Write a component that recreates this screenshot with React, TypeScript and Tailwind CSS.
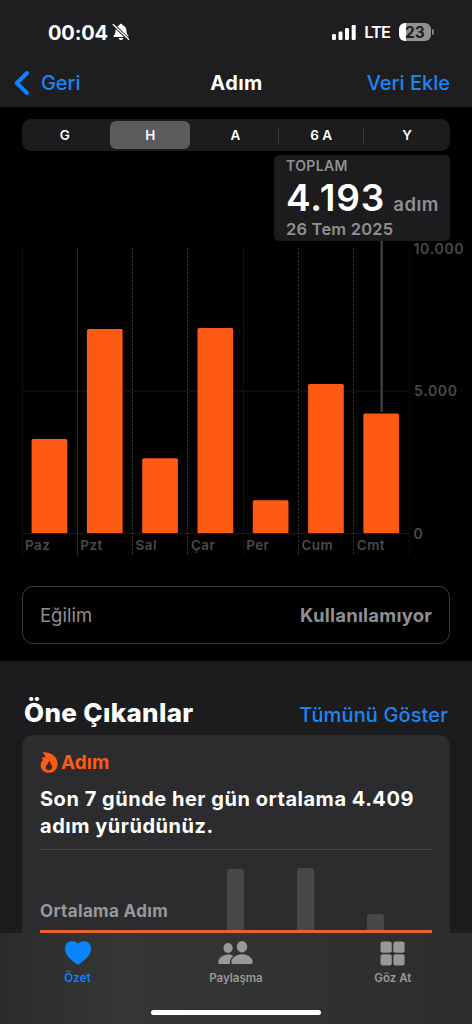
import { useState } from "react"

interface DayEntry {
  day: string
  steps: number
  line: "faint" | "solid" | "dashed"
}

const WEEK: DayEntry[] = [
  { day: "Paz", steps: 3298, line: "faint" },
  { day: "Pzt", steps: 7160, line: "solid" },
  { day: "Sal", steps: 2625, line: "dashed" },
  { day: "Çar", steps: 7195, line: "dashed" },
  { day: "Per", steps: 1150, line: "faint" },
  { day: "Cum", steps: 5228, line: "dashed" },
  { day: "Cmt", steps: 4193, line: "dashed" },
]

const RANGES = ["G", "H", "A", "6 A", "Y"]

const LINE_COLOR = { faint: "#101011", solid: "#2a2a2c", dashed: "#303032" }

// Plot geometry
const COL = 55.3
const PLOT_TOP = 7
const PLOT_H = 285
const BASE = PLOT_TOP + PLOT_H

const barHeight = (steps: number) => (steps / 10000) * PLOT_H

function BellSlashIcon() {
  return (
    <svg width="18" height="18" viewBox="0 0 18 18" className="mb-px ml-[4px]">
      <path
        d="M9 .8c.9 0 1.5.6 1.600 1.400 2.500.7 3.700 2.700 3.800 5.200.1 2.600.7 3.900 1.900 5.100.5.6.2 1.500-.7 1.500H2.400c-.9 0-1.200-.9-.7-1.500C2.900 11.300 3.500 10 3.600 7.400c.1-2.500 1.300-4.500 3.800-5.200C7.500 1.400 8.100.8 9 .8Z"
        fill="#fff"
      />
      <path d="M6.600 15h4.800c-.3 1.200-1.200 1.900-2.400 1.900S6.900 16.200 6.600 15Z" fill="#fff" />
      <path d="M.8 1.200 16.800 16.600" stroke="#1e1e20" strokeWidth="3" />
      <path d="M1.200 1.500 16.600 16.300" stroke="#fff" strokeWidth="1.300" strokeLinecap="round" />
    </svg>
  )
}

function SignalIcon() {
  return (
    <svg width="26" height="16" viewBox="0 0 26 16" fill="#fff">
      <rect x="1" y="10" width="4" height="6" rx="1.200" />
      <rect x="7.500" y="7.500" width="4" height="8.500" rx="1.200" />
      <rect x="14" y="4" width="4" height="12" rx="1.200" />
      <rect x="20.700" y="1" width="4" height="15" rx="1.200" />
    </svg>
  )
}

function FlameIcon() {
  return (
    <svg width="18" height="21" viewBox="0 0 18 21" className="shrink-0">
      <path
        fillRule="evenodd"
        d="M3.200.2C9.500-.2 14.800 2.600 16.800 8c1 2.700 1 5.200.1 7.500-1.300 3.400-4.300 5.300-8.100 5.300C4.200 20.800.8 17.800.7 13.700.6 11 1.600 9.300 3.300 8 2.500 7.500 2 6.700 1.900 5.700c0-.4.4-.6.800-.4.900.4 1.700.4 2.500.1C5.300 3.800 4.500 2.400 2.900 1 2.500.6 2.700.2 3.200.2ZM9.500 9c-.3-.2-.6 0-.6.300 0 1.300-.8 2-1.600 2.900-.9 1-1.500 1.800-1.500 3 0 1.800 1.300 3 3.200 3s3.200-1.200 3.200-3.100c0-1-.3-1.800-.8-2.500-.2.300-.5.500-.8.500.2-1.600-.1-3.100-1.100-4.100Z"
        fill="#ff5a14"
      />
    </svg>
  )
}

function HeartIcon() {
  return (
    <svg width="26" height="24" viewBox="0 0 26 24">
      <path
        d="M13 23.500c-.5 0-1.100-.3-1.900-.9C4.500 17.800 0 13.300 0 7.700 0 3.300 3 .3 6.900.3c2.700 0 4.900 1 6.100 2.500C14.200 1.300 16.400.3 19.100.3 23 .3 26 3.300 26 7.700c0 5.600-4.500 10.100-11.100 14.900-.8.6-1.400.9-1.900.9Z"
        fill="#0a84ff"
      />
    </svg>
  )
}

function PeopleIcon() {
  return (
    <svg width="35" height="24" viewBox="0 0 35 24" fill="#989898">
      <ellipse cx="10" cy="7" rx="4.600" ry="4.900" />
      <ellipse cx="24" cy="5.800" rx="5.200" ry="5.700" />
      <path d="M10 13.500c2.100 0 3.800.5 5.100 1.400-2 1.800-3.300 4.300-3.200 6.500 0 .7.200 1.300.5 1.700H2.500C1 23.100.3 22.500.3 21.200c0-3.700 4-7.700 9.700-7.700Z" />
      <path d="M24 13.300c6.500 0 10.700 4.100 10.700 7.700 0 1.500-.9 2.100-2.400 2.100H15.800c-1.500 0-2.400-.6-2.400-2.100 0-3.600 4.200-7.700 10.600-7.700Z" />
    </svg>
  )
}

function GridIcon() {
  return (
    <svg width="25" height="25" viewBox="0 0 25 25" fill="#989898">
      <rect x=".5" y=".5" width="11.300" height="11.300" rx="2.500" />
      <rect x="13.300" y=".5" width="11.300" height="11.300" rx="2.500" />
      <rect x=".5" y="13.200" width="11.300" height="11.300" rx="2.500" />
      <rect x="13.300" y="13.200" width="11.300" height="11.300" rx="2.500" />
    </svg>
  )
}

function StepChart() {
  return (
    <svg width="450" height="320" viewBox="0 0 450 320" className="block overflow-visible" fontFamily="Inter, sans-serif">
      {[0, 5000].map((v) => (
        <line key={v} x1="0" x2="387" y1={BASE - barHeight(v) + 0.5} y2={BASE - barHeight(v) + 0.5} stroke="#1a1a1c" />
      ))}
      {WEEK.map((d, i) => {
        const x = Math.round(i * COL - 0.4) + 0.5
        return (
          <line
            key={d.day}
            x1={x}
            x2={x}
            y1={PLOT_TOP}
            y2="315"
            stroke={LINE_COLOR[d.line]}
            strokeDasharray={d.line === "dashed" ? "2.500 1.500" : undefined}
          />
        )
      })}
      <line x1="387.500" x2="387.500" y1={PLOT_TOP} y2="315" stroke="#141415" strokeDasharray="2 2" />
      <line x1="359.700" x2="359.700" y1="0" y2="171" stroke="#3d3d3f" strokeWidth="2.500" />
      {WEEK.map((d, i) => {
        const x = 9.6 + i * COL
        const top = BASE - barHeight(d.steps)
        return (
          <path
            key={d.day}
            d={`M${x} ${BASE}V${top + 1.5}q0-1.5 1.5-1.5h32.700q1.500 0 1.500 1.500V${BASE}Z`}
            fill="#ff5a14"
          />
        )
      })}
      <g fill="#4a4a4c" fontSize="13.500" fontWeight="600" letterSpacing=".4">
        {WEEK.map((d, i) => (
          <text key={d.day} x={3 + i * COL} y="309">{d.day}</text>
        ))}
      </g>
      <g fill="#4a4a4c" fontSize="14" fontWeight="600" letterSpacing=".7">
        <text x="391.500" y="12.500">10.000</text>
        <text x="392" y="155">5.000</text>
        <text x="391.500" y="297.500">0</text>
      </g>
    </svg>
  )
}

export default function App() {
  const [range, setRange] = useState("H")

  return (
    <div className="flex h-[1024px] w-[472px] flex-col overflow-hidden bg-black font-[Inter,sans-serif] text-white">
      <header className="h-[107px] shrink-0 bg-[#1e1e20]">
        <div className="flex h-[64px] items-center justify-between pl-[48px] pr-[38px]">
          <div className="flex items-center pt-px">
            <span className="text-[20px] font-bold tracking-[-0.150px]">00:04</span>
            <BellSlashIcon />
          </div>
          <div className="flex items-center">
            <SignalIcon />
            <span className="ml-[7px] pt-px text-[16.500px] font-semibold tracking-[-1px]">LTE</span>
            <span className="ml-[9px] flex h-[18px] w-[32px] items-center justify-center rounded-[6px] bg-linear-to-r from-white from-23% to-[#909092] to-23% pt-px text-[15.500px] font-bold text-[#1e1e20]">
              23
            </span>
            <span className="ml-px h-[6px] w-[2px] rounded-r-full bg-[#808082]" />
          </div>
        </div>
        <div className="grid h-[38px] grid-cols-3 items-center pl-[14px] pr-[22px] text-[20px]">
          <button className="flex items-center gap-[11px] text-[#1a87f5]">
            <svg width="16" height="26" viewBox="0 0 16 26" fill="none">
              <path d="M13 3 2.800 13 13 23" stroke="#0a84ff" strokeWidth="4" strokeLinecap="round" strokeLinejoin="round" />
            </svg>
            <span className="font-medium tracking-[-0.100px]">Geri</span>
          </button>
          <h1 className="pl-[9px] text-center font-bold tracking-[0.400px]">Adım</h1>
          <button className="text-right font-medium text-[#1a87f5]">Veri Ekle</button>
        </div>
      </header>

      <main className="flex min-h-0 flex-1 flex-col">
        <div className="mx-[22px] mt-[12px] grid h-[32px] shrink-0 grid-cols-5 rounded-[9px] bg-[#1c1c1e] py-[2px]">
          {RANGES.map((r, i) => (
            <div key={r} className="flex items-center">
              <button
                onClick={() => setRange(r)}
                className={`mx-auto h-[28px] w-[80px] rounded-[6px] text-[13.500px] font-semibold ${range === r ? "bg-[#5c5c5f]" : ""}`}
              >
                {r}
              </button>
              {(i === 2 || i === 3) && <span className="h-[17px] w-px bg-[#3a3a3c]" />}
            </div>
          ))}
        </div>

        <div className="ml-auto mr-[22px] mt-[4px] h-[86px] w-[176px] shrink-0 rounded-[5px] bg-[#1c1c1e] pl-[12px] pt-[3px] text-[#8f8f93]">
          <p className="text-[14px] font-semibold leading-[16px] tracking-[0.350px]">TOPLAM</p>
          <p className="flex h-[45px] items-baseline gap-[8px] whitespace-nowrap leading-[47px]">
            <span className="text-[37px] font-semibold tracking-[0.900px] text-white">4.193</span>
            <span className="text-[18.500px] font-semibold tracking-[0.500px]">adım</span>
          </p>
          <p className="text-[16.500px] font-semibold leading-[20px] tracking-[0.200px]">26 Tem 2025</p>
        </div>

        <div className="ml-[22px] h-[320px] shrink-0">
          <StepChart />
        </div>

        <div className="mx-[22px] mt-[25px] flex h-[58px] shrink-0 items-center justify-between rounded-[11px] border border-[#3a3a3c] px-[17px] pt-[2px] text-[18.500px] text-[#8f8f93]">
          <span>Eğilim</span>
          <span className="font-bold tracking-[0.220px]">Kullanılamıyor</span>
        </div>

        <section className="mt-[17px] flex min-h-0 flex-1 flex-col bg-[#1c1c1e] px-[22px] pt-[33px]">
          <div className="flex h-[41px] shrink-0 items-baseline justify-between pl-[2px] pr-[2px]">
            <h2 className="text-[26px] font-extrabold leading-[38px] tracking-[0.350px]">Öne Çıkanlar</h2>
            <button className="text-[20px] font-medium tracking-[0.120px] text-[#1a87f5]">Tümünü Göster</button>
          </div>
          <div className="flex min-h-0 flex-1 flex-col rounded-t-[12px] bg-[#2c2c2e] px-[18px] pt-[15px]">
            <div className="flex h-[24px] items-center gap-[3px]">
              <FlameIcon />
              <span className="pt-[2px] text-[19px] font-bold text-[#ff5a14]">Adım</span>
            </div>
            <p className="mt-[12px] whitespace-nowrap text-[20px] font-bold leading-[26.500px] tracking-[0.520px]">
              Son 7 günde her gün ortalama 4.409
              <br />
              adım yürüdünüz.
            </p>
            <div className="mt-[10px] h-px shrink-0 bg-[#48484a]" />
            <div className="flex min-h-0 flex-1 items-end border-b-[3px] border-[#e8622a]">
              <span className="w-[186.500px] pb-[6px] text-[17px] font-bold tracking-[0.350px] text-[#98989c]">Ortalama Adım</span>
              <div className="flex items-end gap-[53px]">
                <div className="h-[61px] w-[17px] rounded-t-[3px] bg-[#48484a]" />
                <div className="h-[62px] w-[17px] rounded-t-[3px] bg-[#48484a]" />
                <div className="h-[16px] w-[17px] rounded-t-[3px] bg-[#48484a]" />
              </div>
            </div>
          </div>
        </section>
      </main>

      <nav className="flex h-[91px] shrink-0 flex-col bg-linear-to-r from-[#2b2b2c] via-[#363637] via-25% to-[#2d2d2e]">
        <div className="grid grid-cols-3 pt-[7px] text-[11.500px] font-semibold text-[#989898]">
          <div className="flex flex-col items-center pr-[2px] text-[#0a84ff]">
            <span className="flex h-[26px] items-center"><HeartIcon /></span>
            <span className="mt-[4px] tracking-[0.200px]">Özet</span>
          </div>
          <div className="flex flex-col items-center">
            <span className="flex h-[26px] items-center"><PeopleIcon /></span>
            <span className="mt-[4px]">Paylaşma</span>
          </div>
          <div className="flex flex-col items-center pr-px">
            <span className="flex h-[26px] items-center"><GridIcon /></span>
            <span className="mt-[4px]">Göz At</span>
          </div>
        </div>
        <div className="mx-auto mb-[9px] mt-auto h-[5px] w-[170px] rounded-full bg-white" />
      </nav>
    </div>
  )
}
